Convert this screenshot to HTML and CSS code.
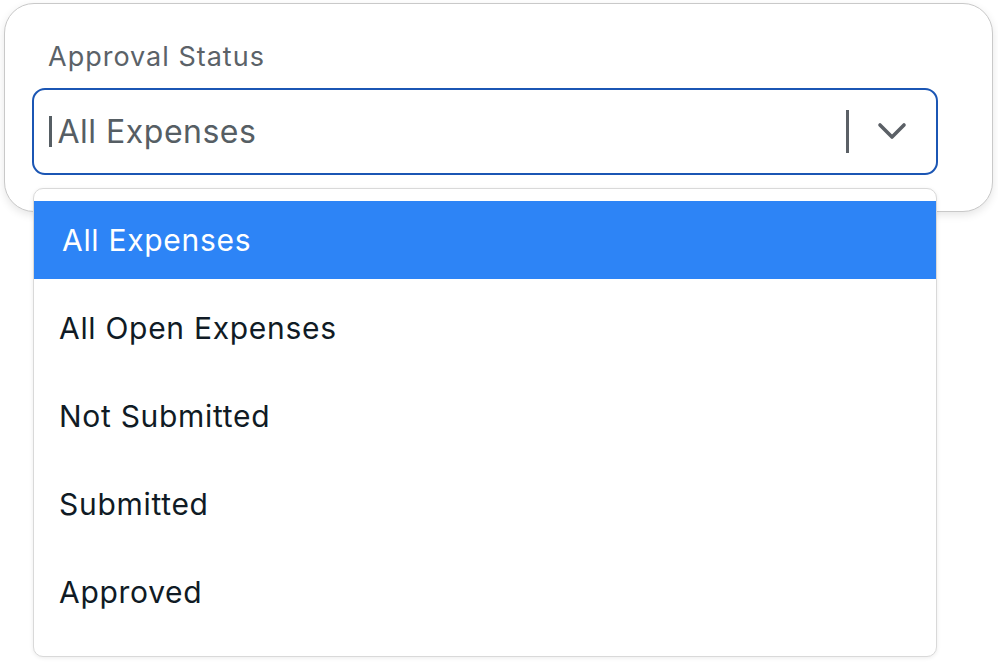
FILE: index.html
```html
<!DOCTYPE html>
<html lang="en">
<head>
<meta charset="utf-8">
<title>Approval Status</title>
<link rel="stylesheet" href="styles.css">
</head>
<body>
<div class="stage">
  <div class="card">
    <div class="label">Approval Status</div>
    <div class="select">
      <div class="value"><span class="caret"></span>All Expenses</div>
      <div class="indicators">
        <span class="sep"></span>
        <svg class="chev" width="30" height="20" viewBox="0 0 30 20"><path d="M3 3 L15 15 L27 3" fill="none" stroke="#5b6066" stroke-width="3.6" stroke-linecap="round" stroke-linejoin="round"/></svg>
      </div>
    </div>
  </div>
  <ul class="menu">
    <li class="opt active">All Expenses</li>
    <li class="opt">All Open Expenses</li>
    <li class="opt">Not Submitted</li>
    <li class="opt">Submitted</li>
    <li class="opt">Approved</li>
  </ul>
</div>
</body>
</html>
```
FILE: styles.css
```css
html, body {
  margin: 0;
  padding: 0;
  background: #ffffff;
}
body {
  width: 998px;
  height: 662px;
  overflow: hidden;
  font-family: "Inter", "Open Sans", sans-serif;
}
.stage {
  position: relative;
  width: 998px;
  height: 662px;
  padding: 3px 0 0 4px;
  box-sizing: border-box;
}
.card {
  width: 989px;
  height: 209px;
  box-sizing: border-box;
  border: 1.5px solid #c9c9c9;
  border-radius: 30px;
  background: #ffffff;
  box-shadow: 0 3px 8px rgba(0,0,0,0.10);
  padding: 37px 0 0 27px;
}
.label {
  font-size: 27px;
  color: #5b6268;
  line-height: 32px;
  margin-left: 16px;
  letter-spacing: 1px;
}
.select {
  margin-top: 15px;
  width: 906px;
  height: 87px;
  box-sizing: border-box;
  border: 2.5px solid #1b56b4;
  border-radius: 13px;
  display: flex;
  align-items: center;
  justify-content: space-between;
  padding-left: 15px;
}
.value {
  display: flex;
  align-items: center;
  font-size: 32px;
  color: #565e64;
  letter-spacing: 0.5px;
}
.caret {
  display: inline-block;
  width: 2.5px;
  height: 31px;
  background: #565e64;
  margin-right: 6px;
}
.indicators {
  display: flex;
  align-items: center;
  height: 100%;
}
.sep {
  width: 3px;
  height: 43px;
  background: #5b6066;
  margin-right: 28px;
}
.chev {
  display: block;
  margin-right: 29px;
}
.menu {
  position: absolute;
  left: 33px;
  top: 188px;
  width: 904px;
  height: 469px;
  box-sizing: border-box;
  margin: 0;
  padding: 12px 0 0 0;
  list-style: none;
  background: #ffffff;
  border: 1px solid #d9d9d9;
  border-radius: 10px;
  box-shadow: 0 1px 4px rgba(0,0,0,0.08);
  display: flex;
  flex-direction: column;
  gap: 10px;
}
.opt {
  height: 78px;
  display: flex;
  align-items: center;
  padding-left: 25px;
  font-size: 30px;
  color: #101b25;
  letter-spacing: 0.7px;
}
.opt.active {
  background: #2d84f6;
  color: #ffffff;
  padding-left: 28px;
}
```
